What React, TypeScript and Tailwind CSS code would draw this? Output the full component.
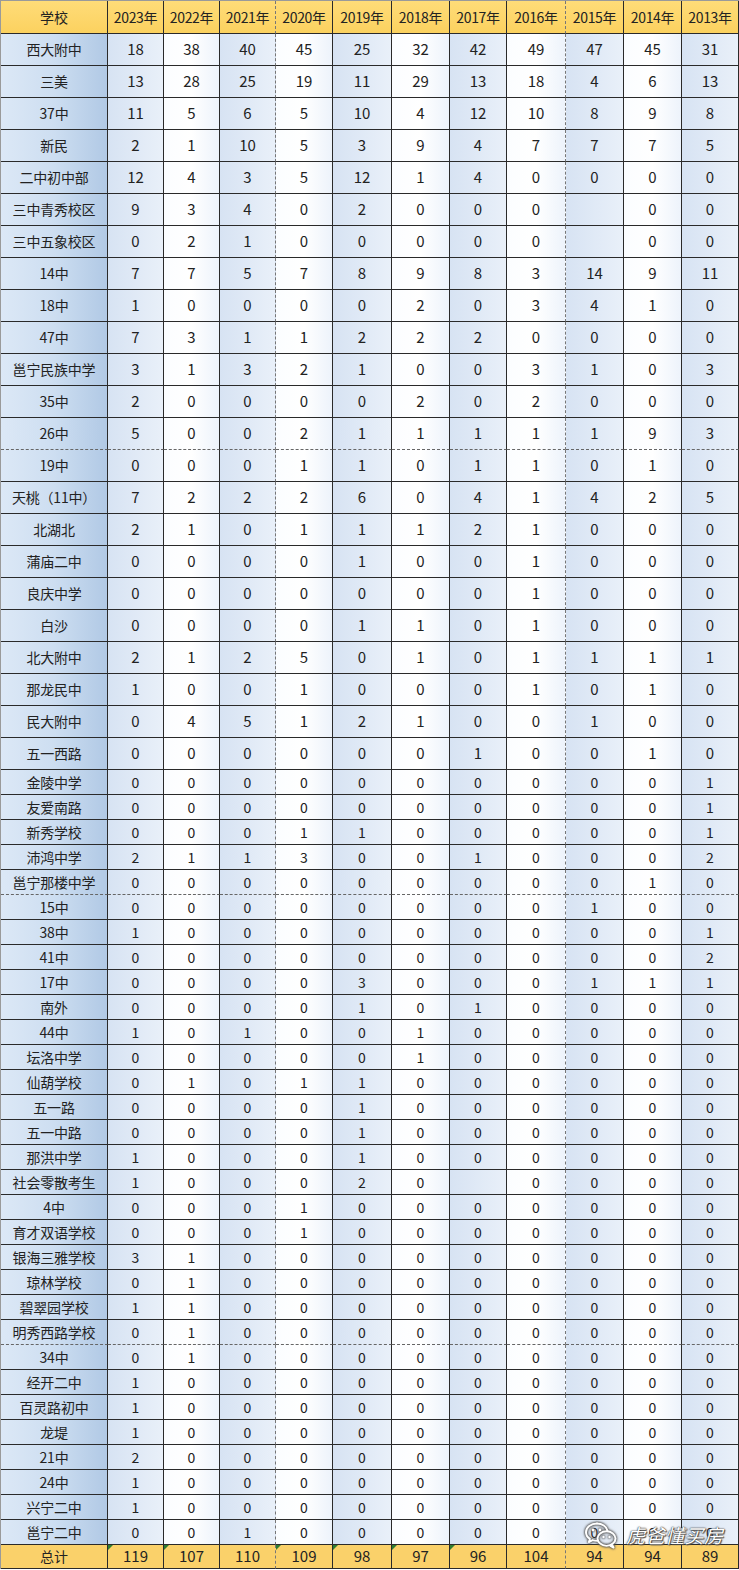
import React from "react";

const years = ["2023年", "2022年", "2021年", "2020年", "2019年", "2018年", "2017年", "2016年", "2015年", "2014年", "2013年"];

const raw: [string, string][] = [
  ["西大附中", "18 38 40 45 25 32 42 49 47 45 31"],
  ["三美", "13 28 25 19 11 29 13 18 4 6 13"],
  ["37中", "11 5 6 5 10 4 12 10 8 9 8"],
  ["新民", "2 1 10 5 3 9 4 7 7 7 5"],
  ["二中初中部", "12 4 3 5 12 1 4 0 0 0 0"],
  ["三中青秀校区", "9 3 4 0 2 0 0 0 - 0 0"],
  ["三中五象校区", "0 2 1 0 0 0 0 0 - 0 0"],
  ["14中", "7 7 5 7 8 9 8 3 14 9 11"],
  ["18中", "1 0 0 0 0 2 0 3 4 1 0"],
  ["47中", "7 3 1 1 2 2 2 0 0 0 0"],
  ["邕宁民族中学", "3 1 3 2 1 0 0 3 1 0 3"],
  ["35中", "2 0 0 0 0 2 0 2 0 0 0"],
  ["26中", "5 0 0 2 1 1 1 1 1 9 3"],
  ["19中", "0 0 0 1 1 0 1 1 0 1 0"],
  ["天桃（11中）", "7 2 2 2 6 0 4 1 4 2 5"],
  ["北湖北", "2 1 0 1 1 1 2 1 0 0 0"],
  ["蒲庙二中", "0 0 0 0 1 0 0 1 0 0 0"],
  ["良庆中学", "0 0 0 0 0 0 0 1 0 0 0"],
  ["白沙", "0 0 0 0 1 1 0 1 0 0 0"],
  ["北大附中", "2 1 2 5 0 1 0 1 1 1 1"],
  ["那龙民中", "1 0 0 1 0 0 0 1 0 1 0"],
  ["民大附中", "0 4 5 1 2 1 0 0 1 0 0"],
  ["五一西路", "0 0 0 0 0 0 1 0 0 1 0"],
  ["金陵中学", "0 0 0 0 0 0 0 0 0 0 1"],
  ["友爱南路", "0 0 0 0 0 0 0 0 0 0 1"],
  ["新秀学校", "0 0 0 1 1 0 0 0 0 0 1"],
  ["沛鸿中学", "2 1 1 3 0 0 1 0 0 0 2"],
  ["邕宁那楼中学", "0 0 0 0 0 0 0 0 0 1 0"],
  ["15中", "0 0 0 0 0 0 0 0 1 0 0"],
  ["38中", "1 0 0 0 0 0 0 0 0 0 1"],
  ["41中", "0 0 0 0 0 0 0 0 0 0 2"],
  ["17中", "0 0 0 0 3 0 0 0 1 1 1"],
  ["南外", "0 0 0 0 1 0 1 0 0 0 0"],
  ["44中", "1 0 1 0 0 1 0 0 0 0 0"],
  ["坛洛中学", "0 0 0 0 0 1 0 0 0 0 0"],
  ["仙葫学校", "0 1 0 1 1 0 0 0 0 0 0"],
  ["五一路", "0 0 0 0 1 0 0 0 0 0 0"],
  ["五一中路", "0 0 0 0 1 0 0 0 0 0 0"],
  ["那洪中学", "1 0 0 0 1 0 0 0 0 0 0"],
  ["社会零散考生", "1 0 0 0 2 0 - 0 0 0 0"],
  ["4中", "0 0 0 1 0 0 0 0 0 0 0"],
  ["育才双语学校", "0 0 0 1 0 0 0 0 0 0 0"],
  ["银海三雅学校", "3 1 0 0 0 0 0 0 0 0 0"],
  ["琼林学校", "0 1 0 0 0 0 0 0 0 0 0"],
  ["碧翠园学校", "1 1 0 0 0 0 0 0 0 0 0"],
  ["明秀西路学校", "0 1 0 0 0 0 0 0 0 0 0"],
  ["34中", "0 1 0 0 0 0 0 0 0 0 0"],
  ["经开二中", "1 0 0 0 0 0 0 0 0 0 0"],
  ["百灵路初中", "1 0 0 0 0 0 0 0 0 0 0"],
  ["龙堤", "1 0 0 0 0 0 0 0 0 0 0"],
  ["21中", "2 0 0 0 0 0 0 0 0 0 0"],
  ["24中", "1 0 0 0 0 0 0 0 0 0 0"],
  ["兴宁二中", "1 0 0 0 0 0 0 0 0 0 0"],
  ["邕宁二中", "0 0 1 0 0 0 0 0 0 0 0"],
];

const totals = ["119", "107", "110", "109", "98", "97", "96", "104", "94", "94", "89"];
const greenMark = [true, true, false, true, true, true, true, false, false, false, false];

const dashedBelow = new Set(["26中", "邕宁那楼中学", "明秀西路学校"]);

const gridCols =
  "grid grid-cols-[107px_56px_56px_56px_57px_59px_58px_57px_59px_58px_58px_57px]";

const base = "flex items-center justify-center border-r border-b border-[#2a2a2a] text-[#222]";

function rightStyle(i: number) {
  return i === 2 || i === 7 ? "[border-right-style:dashed] border-r-[#777]" : "";
}

function WeChatIcon() {
  return (
    <svg width="34" height="28" viewBox="0 0 34 28" className="[filter:drop-shadow(0_0_1px_#444)_drop-shadow(0_0_1px_#666)]">
      <path
        d="M13 2.5C6.9 2.5 2 6.4 2 11.2c0 2.7 1.5 5 3.9 6.6l-1 3.2 3.7-1.9c1.4.4 2.8.6 4.4.6"
        fill="none"
        stroke="#fff"
        strokeWidth="2"
        strokeLinecap="round"
        strokeLinejoin="round"
      />
      <path d="M23.5 9.8c-0.9-4.3-5.3-7.3-10.5-7.3" fill="none" stroke="#fff" strokeWidth="2" strokeLinecap="round" />
      <ellipse cx="22.5" cy="17.5" rx="9" ry="7.2" fill="none" stroke="#fff" strokeWidth="2" />
      <path d="M28 23.5l1.5 3-3.5-1.8" fill="none" stroke="#fff" strokeWidth="2" strokeLinejoin="round" />
      <circle cx="9" cy="9" r="1.4" fill="#fff" />
      <circle cx="16" cy="9" r="1.4" fill="#fff" />
      <circle cx="19.5" cy="16" r="1.2" fill="#fff" />
      <circle cx="25.5" cy="16" r="1.2" fill="#fff" />
    </svg>
  );
}

export default function App() {
  return (
    <div className="w-[739px] bg-white font-['Noto_Sans_CJK_SC','Noto_Sans',sans-serif]">
      <div className="relative border-l border-t border-[#9a9a9a]">
        <div className={`${gridCols} h-[33px] bg-linear-to-b from-[#ffdc78] to-[#fbd15e] text-[14px]`}>
          <div className={base}>学校</div>
          {years.map((y, i) => (
            <div key={y} className={`${base} ${rightStyle(i)} tracking-[-0.3px]`}>
              {y}
            </div>
          ))}
        </div>
        {raw.map(([name, vals], r) => {
          const tall = r < 23;
          const dashed = dashedBelow.has(name);
          const bottom = dashed ? "[border-bottom-style:dashed] border-b-[#666]" : "";
          const cells = vals.split(" ");
          return (
            <div key={name} className={`${gridCols} ${tall ? "h-[32px]" : "h-[25px]"} text-[14px]`}>
              <div className={`${base} ${bottom} bg-linear-to-r from-[#dce8f6] via-[#cddef1] to-[#b1c9e5] tracking-[-0.2px]`}>
                {name}
              </div>
              {cells.map((c, i) => {
                const blue = i % 2 === 0;
                const bg = blue
                  ? "bg-linear-to-r from-[#d7e3f3] to-[#e9f0f9]"
                  : "bg-linear-to-r from-[#fbfdff] via-white to-[#edf3fb]";
                return (
                  <div key={i} className={`${base} ${bg} ${bottom} ${rightStyle(i)} ${tall ? "text-[15px]" : "text-[14px]"}`}>
                    {c === "-" ? "" : c}
                  </div>
                );
              })}
            </div>
          );
        })}
        <div className={`${gridCols} h-[24px] bg-[#fad16a] text-[14px]`}>
          <div className={base}>总计</div>
          {totals.map((t, i) => (
            <div key={i} className={`${base} ${rightStyle(i)} relative text-[15px]`}>
              {greenMark[i] && (
                <span className="absolute left-0 top-0 h-0 w-0 border-t-[5px] border-r-[5px] border-t-[#2e7d32] border-r-transparent" />
              )}
              {t}
            </div>
          ))}
        </div>
        <div className="absolute left-[583px] top-[1520px] flex items-center gap-[8px]">
          <WeChatIcon />
          <span className="text-[19px] italic text-white [text-shadow:0_0_1px_#222,0_0_2px_#444,1px_1px_1px_#555] tracking-[0.5px]">
            虎爸懂买房
          </span>
        </div>
      </div>
    </div>
  );
}
